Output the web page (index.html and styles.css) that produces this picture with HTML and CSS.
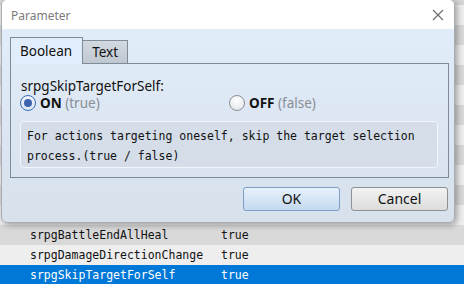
FILE: index.html
```html
<!DOCTYPE html>
<html>
<head>
<meta charset="utf-8">
<link rel="stylesheet" href="styles.css">
</head>
<body>
<div class="list">
  <div class="row alt"><span class="name">srpgEnemyAI</span><span class="val">true</span></div>
  <div class="row"><span class="name">srpgActorAI</span><span class="val">true</span></div>
  <div class="row alt"><span class="name">srpgBattleSwitch</span><span class="val">true</span></div>
  <div class="row"><span class="name">srpgMapBattle</span><span class="val">true</span></div>
  <div class="row alt"><span class="name">srpgUseAgi</span><span class="val">true</span></div>
  <div class="row"><span class="name">srpgPredict</span><span class="val">true</span></div>
  <div class="row alt"><span class="name">srpgBattleQuick</span><span class="val">true</span></div>
  <div class="row"><span class="name">srpgWinLose</span><span class="val">true</span></div>
  <div class="row alt"><span class="name">srpgBattleOrder</span><span class="val">true</span></div>
  <div class="row"><span class="name">srpgAutoBattle</span><span class="val">true</span></div>
  <div class="row alt"><span class="name">srpgBattleReaction</span><span class="val">true</span></div>
  <div class="row"><span class="name">srpgBattleEndAllHeal</span><span class="val">true</span></div>
  <div class="row alt"><span class="name">srpgDamageDirectionChange</span><span class="val">true</span></div>
  <div class="row sel"><span class="name">srpgSkipTargetForSelf</span><span class="val">true</span></div>
</div>

<div class="dialog">
  <div class="titlebar">
    <span class="title">Parameter</span>
    <svg class="close" width="12" height="12" viewBox="0 0 12 12"><path d="M1 1 L11 11 M11 1 L1 11" stroke="#6a6a6a" stroke-width="1.1" fill="none"/></svg>
  </div>
  <div class="content">
    <div class="tabs">
      <div class="tab active">Boolean</div>
      <div class="tab">Text</div>
    </div>
    <div class="panel">
      <div class="label">srpgSkipTargetForSelf:</div>
      <div class="radios">
        <div class="radio"><span class="dot on"></span><b>ON</b>&nbsp;<span class="hint">(true)</span></div>
        <div class="radio"><span class="dot"></span><b>OFF</b>&nbsp;<span class="hint">(false)</span></div>
      </div>
      <div class="desc">For actions targeting oneself, skip the target selection<br>process.(true / false)</div>
    </div>
    <div class="buttons">
      <div class="btn ok">OK</div>
      <div class="btn">Cancel</div>
    </div>
  </div>
</div>
</body>
</html>
```
FILE: styles.css
```css
html, body {
  margin: 0;
  padding: 0;
  width: 464px;
  height: 284px;
  overflow: hidden;
  background: #d6d6d6;
}
body {
  position: relative;
  font-family: "Noto Sans", "DejaVu Sans", sans-serif;
}
.list {
  height: 285px;
  display: flex;
  flex-direction: column;
  justify-content: flex-end;
  overflow: hidden;
  font-family: "DejaVu Sans Mono", monospace;
  font-size: 11.5px;
  color: #111;
}
.row {
  flex: 0 0 20px;
  display: flex;
  align-items: center;
  padding-left: 30px;
  background: #d9d9d9;
}
.row.alt {
  background: #eeeeee;
}
.row.sel {
  background: #0078d7;
  color: #fff;
}
.name {
  width: 191px;
}
.dialog {
  position: absolute;
  left: 1px;
  top: -1px;
  width: 452px;
  height: 222px;
  border: 1px solid #a9adb2;
  border-radius: 6px;
  background: linear-gradient(#e3eefc, #d7e1ec);
  box-shadow: 2px 2px 6px rgba(0,0,0,0.35);
  overflow: hidden;
}
.titlebar {
  height: 29px;
  background: #fff;
  display: flex;
  align-items: center;
  justify-content: space-between;
  padding: 0 10px 0 9px;
}
.title {
  font-size: 12px;
  color: #7a7a7a;
  margin-top: 1px;
}
.close {
  display: block;
  margin-top: 1px;
}
.content {
  padding: 9px 5px 0 8px;
}
.tabs {
  display: flex;
  align-items: flex-end;
  height: 25px;
}
.tab {
  font-size: 13.5px;
  color: #111;
  border: 1px solid #7e8b98;
  border-bottom: none;
  height: 22px;
  line-height: 22px;
  padding: 0 9px;
  background: linear-gradient(#d3d9e0, #bfc7d0);
}
.tab.active {
  line-height: 26px;
  background: #e2edfb;
  position: relative;
  z-index: 1;
  margin-bottom: -1px;
  height: 26px;
  padding: 0 10px 0 9px;
}
.tab + .tab {
  border-left: none;
}
.panel {
  width: 418px;
  border: 1px solid #7e8b98;
  padding: 14px 10px 9px 9px;
  height: 90px;
}
.label {
  font-size: 13.5px;
  line-height: 16px;
  color: #111;
  padding-left: 1px;
}
.radios {
  display: flex;
  height: 18px;
  align-items: center;
}
.radio {
  width: 215px;
  display: flex;
  align-items: center;
  font-size: 13.5px;
  color: #111;
}
.radio b {
  font-weight: bold;
  margin-left: 4px;
}
.hint {
  color: #8a8f96;
}
.dot {
  width: 16px;
  height: 16px;
  box-sizing: border-box;
  border-radius: 50%;
  border: 1px solid #8c8f94;
  background: radial-gradient(circle at 50% 30%, #ffffff, #dfe3e8);
  position: relative;
}
.dot.on {
  border-color: #3d6fb6;
  background: radial-gradient(circle at 50% 30%, #f4f8fc, #d7e3f2);
}
.dot.on::after {
  content: "";
  position: absolute;
  left: 3px;
  top: 3px;
  width: 8px;
  height: 8px;
  border-radius: 50%;
  background: #3c64ac;
}
.desc {
  margin-top: 9px;
  height: 37px;
  border: 1px solid #f2f6fa;
  border-radius: 4px;
  background: #d4dde8;
  padding: 4px 6px;
  font-family: "DejaVu Sans Mono", monospace;
  font-size: 11.5px;
  line-height: 20px;
  color: #111;
}
.buttons {
  display: flex;
  justify-content: flex-end;
  gap: 11px;
  margin-top: 9px;
  padding-right: 1px;
}
.btn {
  width: 95px;
  height: 22px;
  border: 1px solid #8e9094;
  border-radius: 3px;
  background: linear-gradient(#f3f3f3, #dcdcdc);
  font-size: 14px;
  color: #111;
  text-align: center;
  line-height: 22px;
}
.btn.ok {
  border-color: #7d9fc4;
  background: linear-gradient(#e8f1fb, #c4d9ef);
}
```
